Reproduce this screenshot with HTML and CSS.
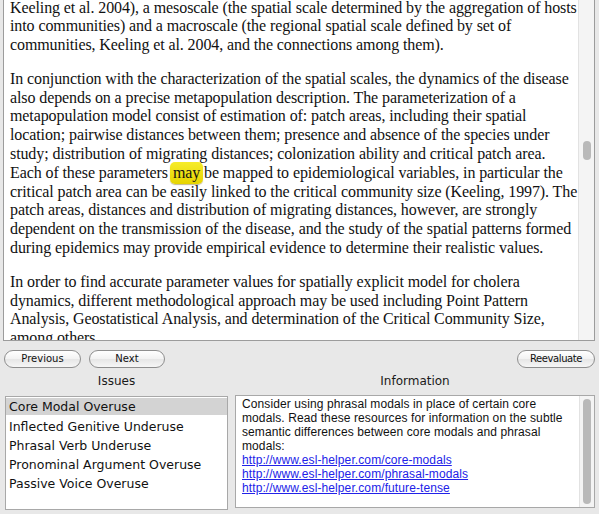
FILE: index.html
```html
<!DOCTYPE html>
<html>
<head>
<meta charset="utf-8">
<title>Reviewer</title>
<link rel="stylesheet" href="styles.css">
</head>
<body>
<div class="doc">
  <div class="doc-text">
    <p>Keeling et al. 2004), a mesoscale (the spatial scale determined by the aggregation of hosts<br>into communities) and a macroscale (the regional spatial scale defined by set of<br>communities, Keeling et al. 2004, and the connections among them).</p>
    <p>In conjunction with the characterization of the spatial scales, the dynamics of the disease<br>also depends on a precise metapopulation description. The parameterization of a<br>metapopulation model consist of estimation of: patch areas, including their spatial<br>location; pairwise distances between them; presence and absence of the species under<br>study; distribution of migrating distances; colonization ability and critical patch area.<br>Each of these parameters <span class="hl">may</span> be mapped to epidemiological variables, in particular the<br>critical patch area can be easily linked to the critical community size (Keeling, 1997). The<br>patch areas, distances and distribution of migrating distances, however, are strongly<br>dependent on the transmission of the disease, and the study of the spatial patterns formed<br>during epidemics may provide empirical evidence to determine their realistic values.</p>
    <p>In order to find accurate parameter values for spatially explicit model for cholera<br>dynamics, different methodological approach may be used including Point Pattern<br>Analysis, Geostatistical Analysis, and determination of the Critical Community Size,<br>among others.</p>
  </div>
  <div class="vscroll doc-scroll"><div class="thumb doc-thumb"></div></div>
</div>

<div class="btn-row">
  <div class="btn-group">
    <button class="btn btn-prev">Previous</button>
    <button class="btn btn-next">Next</button>
  </div>
  <button class="btn btn-reeval">Reevaluate</button>
</div>

<div class="bottom">
  <div class="col col-issues">
    <div class="label">Issues</div>
    <ul class="issues">
      <li class="selected">Core Modal Overuse</li>
      <li>Inflected Genitive Underuse</li>
      <li>Phrasal Verb Underuse</li>
      <li>Pronominal Argument Overuse</li>
      <li>Passive Voice Overuse</li>
    </ul>
  </div>
  <div class="col col-info">
    <div class="label">Information</div>
    <div class="info">
      <div class="info-text">
        Consider using phrasal modals in place of certain core<br>modals. Read these resources for information on the subtle<br>semantic differences between core modals and phrasal<br>modals:<br>
        <a href="#">http://www.esl-helper.com/core-modals</a><br>
        <a href="#">http://www.esl-helper.com/phrasal-modals</a><br>
        <a href="#">http://www.esl-helper.com/future-tense</a>
      </div>
      <div class="vscroll info-scroll"><div class="thumb info-thumb"></div></div>
    </div>
  </div>
</div>
</body>
</html>
```

FILE: styles.css
```css
html, body {
  margin: 0;
  padding: 0;
  background: #e8e8e8;
  width: 599px;
  height: 514px;
  overflow: hidden;
}

.doc {
  display: flex;
  margin-left: 3px;
  width: 590px;
  height: 340px;
  border: 1px solid #9c9c9c;
  border-top: none;
  background: #fff;
  overflow: hidden;
}

.doc-text {
  flex: 1;
  padding-left: 6px;
  margin-top: -1.5px;
  font-family: "Liberation Serif", "Times New Roman", serif;
  font-size: 16px;
  letter-spacing: -0.1px;
  line-height: 18.8px;
  color: #111;
  white-space: nowrap;
  overflow: hidden;
}

.doc-text p {
  margin: 0 0 15px 0;
}

.hl {
  background: linear-gradient(#f6ec2a, #e6d400);
  border-radius: 5px;
  padding: 2px 3px 3px 3px;
  margin: 0 -3px 0 -2px;
  box-shadow: 0 1px 1px rgba(120, 100, 0, 0.45);
}

.vscroll {
  width: 15px;
  background: #f4f4f4;
  border-left: 1px solid #e2e2e2;
  display: flex;
  flex-direction: column;
  align-items: center;
}

.thumb {
  width: 8px;
  background: #b9b9b9;
  border-radius: 4px;
}

.doc-thumb {
  margin-top: 141px;
  height: 19px;
}

.btn-row {
  display: flex;
  justify-content: space-between;
  align-items: center;
  padding: 8px 4px 0 4px;
  height: 19px;
}

.btn-group {
  display: flex;
  gap: 8px;
}

.btn {
  height: 18px;
  width: 77px;
  padding: 0;
  border: 1px solid #8e8e8e;
  border-radius: 9px;
  background: linear-gradient(#ffffff, #f2f2f2 50%, #e6e6e6 51%, #f6f6f6);
  font-family: "DejaVu Sans", sans-serif;
  font-size: 10px;
  color: #111;
  line-height: 16px;
}

.btn-next {
  width: 76px;
}

.btn-reeval {
  width: 78px;
  letter-spacing: -0.4px;
}

.bottom {
  display: grid;
  grid-template-columns: 223px 360px;
  column-gap: 7px;
  padding: 4px 0 0 5px;
}

.label {
  text-align: center;
  font-family: "DejaVu Sans", sans-serif;
  font-size: 12px;
  line-height: 20px;
  color: #1a1a1a;
  margin-bottom: 5px;
  margin-top: -1px;
}

.issues {
  list-style: none;
  margin: 0;
  padding: 1px 0 0 0;
  height: 111px;
  border: 1px solid #a8a8a8;
  background: #fff;
  font-family: "DejaVu Sans", sans-serif;
  font-size: 12.5px;
  color: #111;
}

.issues li {
  height: 19px;
  line-height: 19px;
  padding-left: 3px;
}

.issues li.selected {
  background: #d3d3d3;
  height: 17px;
  line-height: 17px;
  margin-bottom: 2px;
}

.info {
  display: flex;
  height: 111px;
  border: 1px solid #a8a8a8;
  background: #fff;
  margin-top: -1px;
}

.info-text {
  flex: 1;
  padding: 1px 0 0 6px;
  font-family: "Liberation Sans", Arial, sans-serif;
  font-size: 12px;
  letter-spacing: 0.1px;
  line-height: 14px;
  color: #111;
  white-space: nowrap;
}

.info-text a {
  color: #2222e8;
  text-decoration: underline;
}

.info-scroll {
  width: 14px;
}

.info-thumb {
  margin-top: 3px;
  height: 105px;
}
```
